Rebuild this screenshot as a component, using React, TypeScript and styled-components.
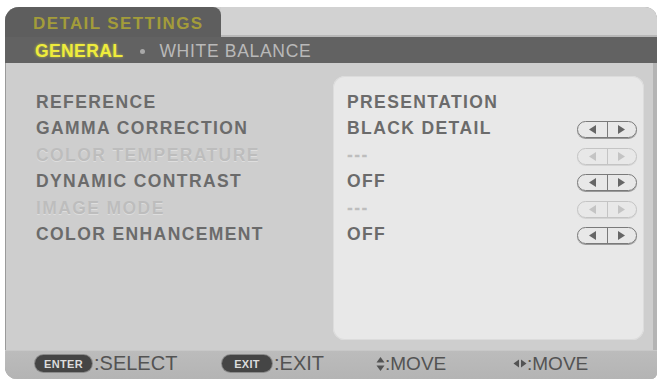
import styled, { createGlobalStyle } from "styled-components";

const Global = createGlobalStyle`
  body {
    margin: 0;
    background: #fff;
    font-family: "Liberation Sans", Arial, sans-serif;
  }
`;

const Frame = styled.div`
  margin: 7px 5px 0 5px;
  width: 652px;
  height: 372px;
  border-radius: 14px 12px 6px 12px;
  overflow: hidden;
  background: #cecece;
  box-shadow: inset -4px 0 0 #b4b4b4, inset 1px 0 0 #9a9a9a;
  display: flex;
  flex-direction: column;
`;

const TabRow = styled.div`
  height: 30px;
  display: flex;
`;

const Tab = styled.div`
  width: 216px;
  background: #5e5e5e;
  border-top-right-radius: 8px;
  padding-left: 28px;
  display: flex;
  align-items: center;
  padding-top: 4px;
  box-sizing: border-box;
  color: #a39c3a;
  font-size: 17px;
  font-weight: 700;
  letter-spacing: 1.4px;
`;

const TabRest = styled.div`
  flex: 1;
  background: #d2d2d2;
  border-top-right-radius: 12px;
  box-shadow: inset 0 -2px 0 #b8b8b8;
`;

const SubBar = styled.div`
  height: 26px;
  background: #626262;
  display: flex;
  align-items: center;
  padding-left: 30px;
  padding-top: 2px;
  box-sizing: border-box;
  font-size: 17.5px;
`;

const SubTab = styled.span<{ $active?: boolean }>`
  color: ${(p) => (p.$active ? "#eeec3c" : "#b9b9b9")};
  font-weight: ${(p) => (p.$active ? 700 : 400)};
  letter-spacing: ${(p) => (p.$active ? "0.4px" : "0.7px")};
  text-shadow: ${(p) => (p.$active ? "0 0 3px rgba(240,240,60,0.6)" : "none")};
`;

const Dot = styled.span`
  width: 5px;
  height: 5px;
  border-radius: 50%;
  background: #a8a8a8;
  margin: 0 14px 0 17px;
`;

const Body = styled.div`
  height: 287px;
  display: flex;
  padding: 13px 13px 10px 0;
  box-sizing: border-box;
`;

const LabelList = styled.div`
  width: 328px;
  padding: 13px 0 0 31px;
  box-sizing: border-box;
`;

const Panel = styled.div`
  flex: 1;
  background: #e8e8e8;
  border-radius: 12px;
  padding: 13px 7px 0 14px;
  box-shadow: inset 0 0 0 1px #dcdcdc;
`;

const Row = styled.div`
  height: 26.5px;
  display: flex;
  align-items: center;
  justify-content: space-between;
`;

const Text = styled.span<{ $off?: boolean }>`
  font-size: 17.5px;
  font-weight: 700;
  letter-spacing: 1.4px;
  color: ${(p) => (p.$off ? "#bdbdbd" : "#6b6b6b")};
  text-shadow: ${(p) => (p.$off ? "0 1px 0 #dedede" : "none")};
`;

const Stepper = styled.div<{ $off?: boolean }>`
  width: 60px;
  height: 17px;
  box-sizing: border-box;
  border: 1.5px solid ${(p) => (p.$off ? "#c4c4c4" : "#7a7a7a")};
  border-radius: 9px;
  display: flex;
  margin-top: 2px;
  box-shadow: 0 1px 0 ${(p) => (p.$off ? "#d4d4d4" : "#9a9a9a")};
`;

const Half = styled.div<{ $off?: boolean; $left?: boolean }>`
  flex: 1;
  display: flex;
  align-items: center;
  justify-content: center;
  border-left: ${(p) => (p.$left ? "none" : `1.5px solid ${p.$off ? "#c4c4c4" : "#7a7a7a"}`)};
  color: ${(p) => (p.$off ? "#c4c4c4" : "#666")};
`;

const Footer = styled.div`
  flex: 1;
  background: linear-gradient(#bcbcbc, #b4b4b4);
  box-shadow: inset 0 1px 0 #c8c8c8;
  display: grid;
  grid-template-columns: 187px 154px 137px auto;
  align-items: center;
  padding-left: 30px;
  padding-bottom: 2px;
  color: #535353;
  font-size: 20px;
`;

const Hint = styled.div`
  display: flex;
  align-items: center;
  white-space: nowrap;
`;

const Key = styled.span<{ $w: number }>`
  width: ${(p) => p.$w}px;
  height: 17px;
  border-radius: 9px;
  background: #454545;
  box-shadow: 0 0 0 1px #8a8a8a;
  color: #dcdcdc;
  font-size: 11px;
  font-weight: 700;
  display: flex;
  align-items: center;
  justify-content: center;
  letter-spacing: 0.3px;
  margin-right: 2px;
`;

const MoveText = styled.span`
  font-size: 19px;
`;

const Tri = ({ dir }: { dir: "l" | "r" }) => (
  <svg width="7" height="9" viewBox="0 0 7 9">
    {dir === "l" ? (
      <polygon points="7,0 0,4.5 7,9" fill="currentColor" />
    ) : (
      <polygon points="0,0 7,4.5 0,9" fill="currentColor" />
    )}
  </svg>
);

const rows = [
  { label: "REFERENCE", value: "PRESENTATION", off: false, stepper: false },
  { label: "GAMMA CORRECTION", value: "BLACK DETAIL", off: false, stepper: true },
  { label: "COLOR TEMPERATURE", value: "---", off: true, stepper: true },
  { label: "DYNAMIC CONTRAST", value: "OFF", off: false, stepper: true },
  { label: "IMAGE MODE", value: "---", off: true, stepper: true },
  { label: "COLOR ENHANCEMENT", value: "OFF", off: false, stepper: true },
];

export default function App() {
  return (
    <>
      <Global />
      <Frame>
        <TabRow>
          <Tab>DETAIL SETTINGS</Tab>
          <TabRest />
        </TabRow>
        <SubBar>
          <SubTab $active>GENERAL</SubTab>
          <Dot />
          <SubTab>WHITE BALANCE</SubTab>
        </SubBar>
        <Body>
          <LabelList>
            {rows.map((r) => (
              <Row key={r.label}>
                <Text $off={r.off}>{r.label}</Text>
              </Row>
            ))}
          </LabelList>
          <Panel>
            {rows.map((r) => (
              <Row key={r.label}>
                <Text $off={r.off}>{r.value}</Text>
                {r.stepper && (
                  <Stepper $off={r.off}>
                    <Half $off={r.off} $left>
                      <Tri dir="l" />
                    </Half>
                    <Half $off={r.off}>
                      <Tri dir="r" />
                    </Half>
                  </Stepper>
                )}
              </Row>
            ))}
          </Panel>
        </Body>
        <Footer>
          <Hint>
            <Key $w={57}>ENTER</Key>:SELECT
          </Hint>
          <Hint>
            <Key $w={50}>EXIT</Key>:EXIT
          </Hint>
          <Hint>
            <svg width="9" height="16" viewBox="0 0 9 16">
              <polygon points="4.5,1 8.5,6.5 0.5,6.5" fill="#535353" />
              <polygon points="0.5,9.5 8.5,9.5 4.5,15" fill="#535353" />
            </svg>
            <MoveText>:MOVE</MoveText>
          </Hint>
          <Hint>
            <svg width="14" height="9" viewBox="0 0 14 9">
              <polygon points="6,0.5 0.5,4.5 6,8.5" fill="#535353" />
              <polygon points="8,0.5 13.5,4.5 8,8.5" fill="#535353" />
            </svg>
            <MoveText>:MOVE</MoveText>
          </Hint>
        </Footer>
      </Frame>
    </>
  );
}
